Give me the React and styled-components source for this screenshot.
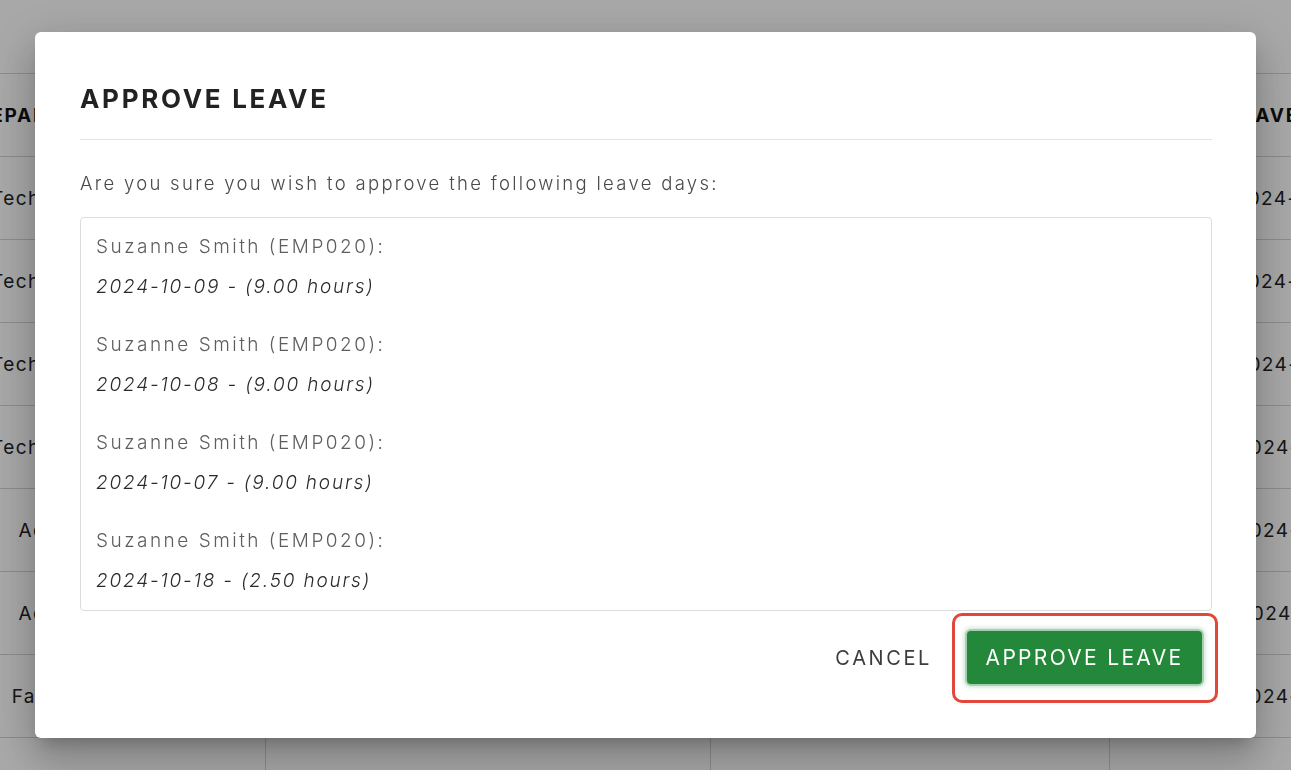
import React from "react";
import styled, { createGlobalStyle } from "styled-components";

const FONT = `"Inter", "Open Sans", "Liberation Sans", sans-serif`;

const GlobalStyle = createGlobalStyle`
  html, body { margin: 0; padding: 0; }
  body { font-family: ${FONT}; background: #ffffff; overflow: hidden; }
  * { box-sizing: border-box; }
`;

const Page = styled.div`
  position: relative;
  width: 100%;
  height: 100vh;
  overflow: hidden;
  background: #ffffff;
  padding-top: 73px;
`;

const Table = styled.table`
  border-collapse: collapse;
  margin-left: -165px;
  table-layout: fixed;
  width: 1646px;
  font-family: ${FONT};
`;

const HeadCell = styled.th`
  height: 83px;
  width: ${(p) => p.$w}px;
  border-top: 1px solid #d4d4d4;
  border-bottom: 1px solid #d4d4d4;
  border-left: 1px solid #d4d4d4;
  font-size: 19px;
  font-weight: 700;
  letter-spacing: 1.8px;
  color: #111;
  text-align: center;
  white-space: nowrap;
`;

const Cell = styled.td`
  height: 83px;
  border-bottom: 1px solid #d4d4d4;
  border-left: 1px solid #d4d4d4;
  font-size: 19px;
  font-weight: 400;
  letter-spacing: 1.4px;
  color: #222;
  text-align: center;
  white-space: nowrap;
`;

const Backdrop = styled.div`
  position: fixed;
  inset: 0;
  background: rgba(0, 0, 0, 0.34);
  display: flex;
  align-items: center;
  justify-content: center;
`;

const Dialog = styled.div`
  width: 1221px;
  height: 706px;
  background: #ffffff;
  border-radius: 6px;
  padding: 52px 44px 35px 45px;
  display: flex;
  flex-direction: column;
  box-shadow: 0 11px 15px -7px rgba(0, 0, 0, 0.2),
    0 24px 38px 3px rgba(0, 0, 0, 0.14), 0 9px 46px 8px rgba(0, 0, 0, 0.12);
`;

const Title = styled.h2`
  margin: 0;
  padding-bottom: 25px;
  border-bottom: 1px solid #e4e4e4;
  font-size: 26px;
  line-height: 30px;
  font-weight: 700;
  letter-spacing: 2.7px;
  color: #222;
`;

const Prompt = styled.p`
  margin: 31px 0 22px;
  font-size: 18.5px;
  line-height: 24px;
  font-weight: 300;
  color: #4a4a4a;
  letter-spacing: 2.3px;
  white-space: nowrap;
`;

const List = styled.div`
  height: 394px;
  border: 1px solid #dcdcdc;
  border-radius: 4px;
  padding: 17px 15px;
  display: flex;
  flex-direction: column;
  gap: 34px;
  overflow: hidden;
`;

const Entry = styled.div`
  display: flex;
  flex-direction: column;
  gap: 16px;
`;

const Name = styled.div`
  font-size: 19px;
  line-height: 24px;
  font-weight: 300;
  color: #5e5e5e;
  letter-spacing: 2.5px;
  white-space: nowrap;
`;

const When = styled.div`
  font-size: 19px;
  line-height: 24px;
  font-weight: 300;
  font-style: italic;
  color: #2a2a2a;
  letter-spacing: 1.8px;
  white-space: nowrap;
`;

const Footer = styled.div`
  margin-top: 2px;
  margin-right: -6px;
  display: flex;
  align-items: center;
  justify-content: flex-end;
`;

const TextButton = styled.button`
  background: none;
  border: none;
  font-family: ${FONT};
  font-size: 20px;
  font-weight: 400;
  color: #3c3c3c;
  letter-spacing: 2.6px;
  padding: 8px 0;
  margin-right: 20px;
  cursor: pointer;
`;

const Highlight = styled.div`
  border: 3px solid #e1483a;
  border-radius: 10px;
  padding: 15px 13px 16px 12px;
`;

const PrimaryButton = styled.button`
  display: block;
  width: 235px;
  height: 53px;
  padding: 0;
  background: #23883a;
  border: none;
  border-radius: 4px;
  color: #ffffff;
  font-family: ${FONT};
  font-size: 21px;
  font-weight: 400;
  letter-spacing: 2.3px;
  white-space: nowrap;
  box-shadow: 0 0 0 2px rgba(35, 136, 58, 0.25), 0 0 4px 3px rgba(35, 136, 58, 0.25);
  cursor: pointer;
`;

const rows = [
  ["Technology", "Supervisor", "Sick Leave", "2024-10-09"],
  ["Technology", "Supervisor", "Sick Leave", "2024-10-08"],
  ["Technology", "Supervisor", "Sick Leave", "2024-10-07"],
  ["Technology", "Supervisor", "Sick Leave", "2024-10-18"],
  ["Admin", "Supervisor", "Sick Leave", "2024-10-10"],
  ["Admin", "Supervisor", "Sick Leave", "2024-10-11"],
  ["Factory", "Supervisor", "Sick Leave", "2024-10-14"],
  ["Factory", "Supervisor", "Sick Leave", "2024-10-15"],
];

const entries = [
  ["2024-10-09", "9.00"],
  ["2024-10-08", "9.00"],
  ["2024-10-07", "9.00"],
  ["2024-10-18", "2.50"],
];

export default function App() {
  return (
    <>
      <GlobalStyle />
      <Page>
        <Table>
          <thead>
            <tr>
              <HeadCell $w={430}>DEPARTMENT</HeadCell>
              <HeadCell $w={445}>ROLE</HeadCell>
              <HeadCell $w={399}>LEAVE TYPE</HeadCell>
              <HeadCell $w={372}>LEAVE DATE</HeadCell>
            </tr>
          </thead>
          <tbody>
            {rows.map((r, i) => (
              <tr key={i}>
                {r.map((c, j) => (
                  <Cell key={j}>{c}</Cell>
                ))}
              </tr>
            ))}
          </tbody>
        </Table>
        <Backdrop>
          <Dialog>
            <Title>APPROVE LEAVE</Title>
            <Prompt>Are you sure you wish to approve the following leave days:</Prompt>
            <List>
              {entries.map(([d, h]) => (
                <Entry key={d}>
                  <Name>Suzanne Smith (EMP020):</Name>
                  <When>
                    {d} - ({h} hours)
                  </When>
                </Entry>
              ))}
            </List>
            <Footer>
              <TextButton>CANCEL</TextButton>
              <Highlight>
                <PrimaryButton>APPROVE LEAVE</PrimaryButton>
              </Highlight>
            </Footer>
          </Dialog>
        </Backdrop>
      </Page>
    </>
  );
}
